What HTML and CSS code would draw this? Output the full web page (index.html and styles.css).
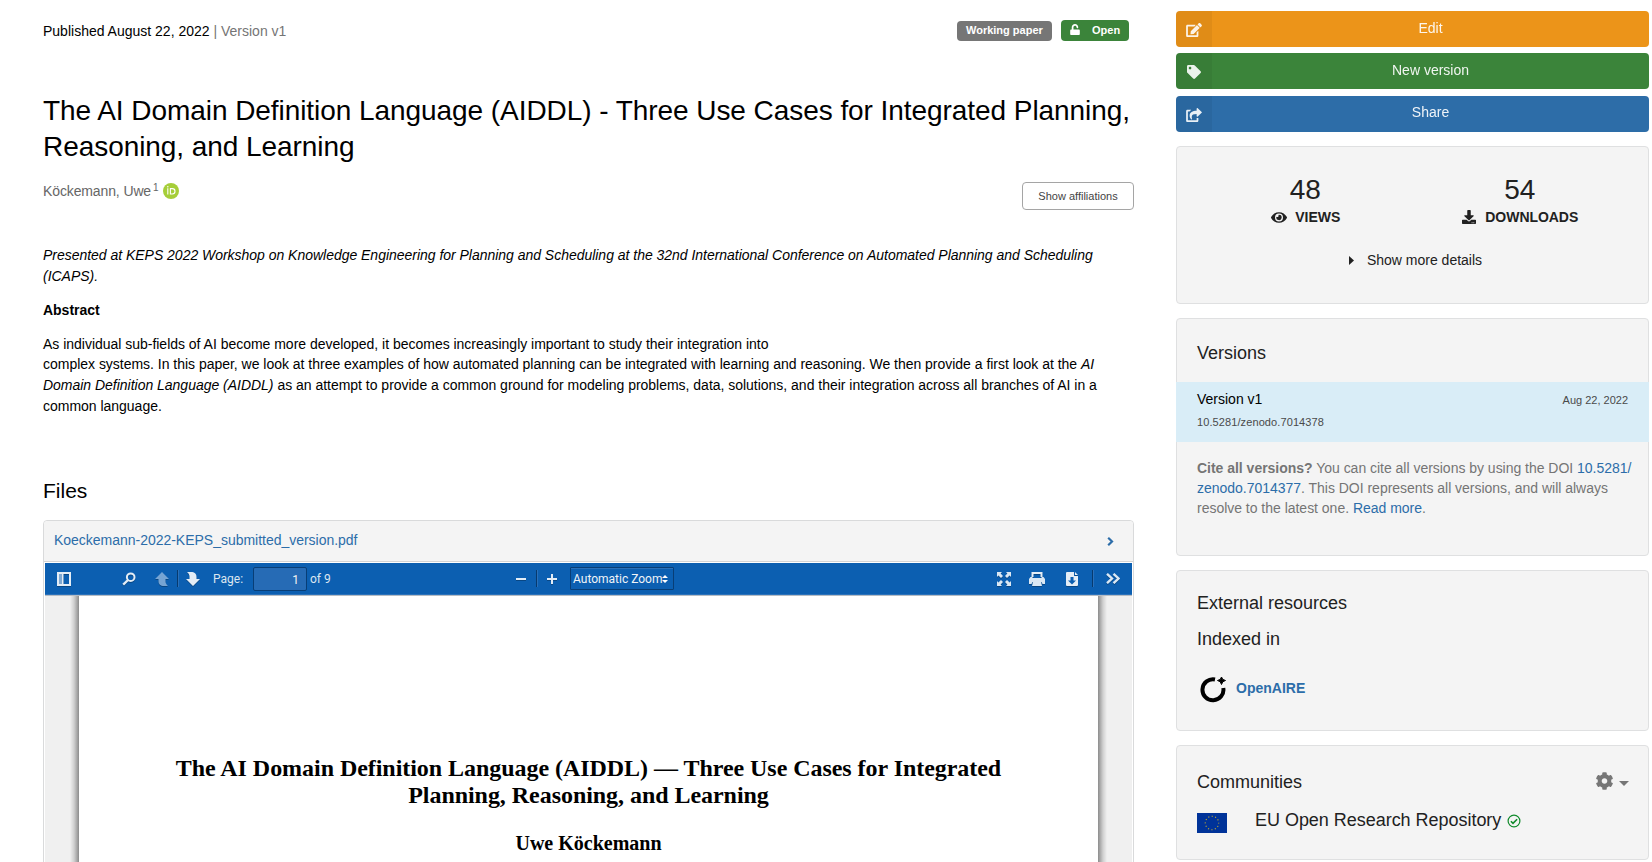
FILE: index.html
```html
<!DOCTYPE html>
<html lang="en">
<head>
<meta charset="utf-8">
<title>The AI Domain Definition Language (AIDDL)</title>
<link rel="stylesheet" href="styles.css">
</head>
<body>
<div class="page">
<main class="record">
  <div class="meta">
    <p class="meta-text">Published August 22, 2022 <span class="muted">| Version v1</span></p>
    <div class="labels">
      <span class="label label-type">Working paper</span>
      <span class="label label-open"><svg class="lock" viewBox="0 0 448 512"><path d="M400 256H152V152.900c0-39.600 31.700-72.500 71.300-72.900 40-.4 72.700 32.100 72.700 72v16c0 13.300 10.700 24 24 24h32c13.300 0 24-10.700 24-24v-16C376 68 307.500-.3 223.500 0 139.500.3 72 69.500 72 153.500V256H48c-26.500 0-48 21.500-48 48v160c0 26.500 21.500 48 48 48h352c26.500 0 48-21.500 48-48V304c0-26.500-21.500-48-48-48z"/></svg>Open</span>
    </div>
  </div>
  <h1 class="title">The AI Domain Definition Language (AIDDL) - Three Use Cases for Integrated Planning,<br>Reasoning, and Learning</h1>
  <div class="creators">
    <p class="creator"><span class="creator-name">Köckemann, Uwe</span><sup class="aff">1</sup><svg class="orcid" viewBox="0 0 16 16"><circle cx="8" cy="8" r="8" fill="#a6ce39"/><g fill="none" stroke="#fff"><path d="M4.800 5.200v6.300M7.400 5.600h1.900a2.700 2.700 0 0 1 0 5.400H7.400z" stroke-width="1.100"/></g><circle cx="4.800" cy="3.800" r=".75" fill="#fff"/></svg></p>
    <button class="aff-button">Show affiliations</button>
  </div>
  <section class="description">
    <p class="venue"><em>Presented at KEPS 2022 Workshop on Knowledge Engineering for Planning and Scheduling at the 32nd International Conference on Automated Planning and Scheduling<br>(ICAPS).</em></p>
    <p><b>Abstract</b></p>
    <p class="abstract">As individual sub-fields of AI become more developed, it becomes increasingly important to study their integration into<br>complex systems. In this paper, we look at three examples of how automated planning can be integrated with learning and reasoning. We then provide a first look at the <em>AI<br>Domain Definition Language (AIDDL)</em> as an attempt to provide a common ground for modeling problems, data, solutions, and their integration across all branches of AI in a<br>common language.</p>
  </section>
  <h2 class="files-title">Files</h2>
  <section class="preview">
    <div class="preview-head"><a>Koeckemann-2022-KEPS_submitted_version.pdf</a><svg class="chevron" viewBox="0 0 7 9"><path d="M1.200.8L5 4.500 1.200 8.200" fill="none" stroke="#2c6da9" stroke-width="2.200"/></svg></div>
    <div class="viewer">
      <div class="toolbar">
        <div class="tools-left">
          <svg class="ic ic-side" viewBox="0 0 14 14"><path d="M1 1h12v12H1zM5.500 1v12" fill="none" stroke="#e4edf6" stroke-width="2"/><path d="M2 2h3v10H2z" fill="#7fa9d3"/></svg>
          <svg class="ic ic-search" viewBox="0 0 14 14"><circle cx="8.700" cy="5.200" r="3.800" fill="none" stroke="#e4edf6" stroke-width="2"/><path d="M6 8L1.200 12.600" stroke="#e4edf6" stroke-width="2.400"/></svg>
          <svg class="ic ic-up" viewBox="0 0 14 14"><path d="M7 0l7 7h-3.500v2.500c0 1.800 1 3 2.500 4.500H9c-3.500 0-5.500-1.500-5.500-5V7H0z" fill="#76a4d3"/></svg>
          <i class="sep"></i>
          <svg class="ic ic-down" viewBox="0 0 14 14"><path d="M7 14l7-7h-3.500V5c0-3.500-2-5-5.500-5H1c1.500 1.500 2.500 2.500 2.500 4.500V7H0z" fill="#e4edf6"/></svg>
          <span class="page-label">Page:</span>
          <span class="page-input">1</span>
          <span class="page-count">of 9</span>
        </div>
        <div class="tools-mid">
          <svg class="ic ic-minus" viewBox="0 0 10 10"><path d="M0 5h10" stroke="#e4edf6" stroke-width="2"/></svg>
          <i class="sep"></i>
          <svg class="ic ic-plus" viewBox="0 0 10 10"><path d="M0 5h10M5 0v10" stroke="#e4edf6" stroke-width="2"/></svg>
          <span class="zoom">Automatic Zoom<svg class="updown" viewBox="0 0 6 8"><path d="M3 0l3 3H0zM3 8l3-3H0z" fill="#fff"/></svg></span>
        </div>
        <div class="tools-right">
          <svg class="ic ic-full" viewBox="0 0 14 14"><path d="M0 0h5L3.600 1.400 6 4 4 6 1.400 3.600 0 5zM14 0v5l-1.400-1.400L10 6 8 4l2.400-2.600L9 0zM0 14V9l1.400 1.400L4 8l2 2-2.400 2.600L5 14zM14 14H9l1.400-1.400L8 10l2-2 2.600 2.400L14 9z" fill="#dbe8f4"/></svg>
          <svg class="ic ic-print" viewBox="0 0 16 14"><path d="M3.500 5V1h9v4" fill="none" stroke="#e4edf6" stroke-width="2"/><path d="M1.500 5h2v1h9V5h2L16 7v5h-2.500l-1-2h-9l-1 2H0V7zM4 10h8l1 4H3z" fill="#dbe8f4"/></svg>
          <svg class="ic ic-save" viewBox="0 0 12 14"><path d="M0 1q0-1 1-1h7v4h4v9q0 1-1 1H1q-1 0-1-1zM9 0l3 3H9z" fill="#e4edf6"/><path d="M4.500 5h3v3.500H10L6 12.500 2 8.500h2.500z" fill="#0c5fb1"/></svg>
          <i class="sep"></i>
          <svg class="ic ic-more" viewBox="0 0 14 11"><path d="M1 .8l5 4.700-5 4.700M7.500.8l5 4.700-5 4.700" fill="none" stroke="#dbe8f4" stroke-width="2.400"/></svg>
        </div>
      </div>
      <div class="canvas">
        <div class="sheet">
          <p class="paper-title">The AI Domain Definition Language (AIDDL) — Three Use Cases for Integrated<br>Planning, Reasoning, and Learning</p>
          <p class="paper-author">Uwe Köckemann</p>
        </div>
      </div>
    </div>
  </section>
</main>
<aside class="sidebar">
  <div class="actions">
    <button class="action edit"><span class="action-icon"><svg viewBox="0 0 576 512"><path d="M402.600 83.200l90.200 90.200c3.800 3.800 3.800 10 0 13.800L274.400 405.600l-92.800 10.300c-12.400 1.400-22.900-9.100-21.500-21.500l10.300-92.800L388.800 83.200c3.800-3.800 10-3.800 13.800 0zm162-22.900l-48.800-48.800c-15.200-15.200-39.900-15.200-55.200 0l-35.400 35.400c-3.800 3.800-3.800 10 0 13.800l90.200 90.200c3.800 3.800 10 3.800 13.800 0l35.400-35.400c15.200-15.300 15.200-40 0-55.200zM384 346.200V448H64V128h229.800c3.200 0 6.200-1.300 8.500-3.500l40-40c7.600-7.600 2.200-20.500-8.500-20.500H48C21.500 64 0 85.500 0 112v352c0 26.500 21.500 48 48 48h352c26.500 0 48-21.500 48-48V306.200c0-10.700-12.900-16-20.500-8.500l-40 40c-2.200 2.300-3.500 5.300-3.500 8.500z"/></svg></span><span class="action-text">Edit</span></button>
    <button class="action new"><span class="action-icon"><svg viewBox="0 0 512 512"><path d="M0 252.100V48C0 21.500 21.500 0 48 0h204.100a48 48 0 0 1 33.900 14.100l211.900 211.900c18.700 18.700 18.700 49.100 0 67.900L293.800 497.900c-18.700 18.700-49.100 18.700-67.900 0L14.100 286.100A48 48 0 0 1 0 252.100zM112 64c-26.500 0-48 21.500-48 48s21.500 48 48 48 48-21.500 48-48-21.500-48-48-48z"/></svg></span><span class="action-text">New version</span></button>
    <button class="action share"><span class="action-icon"><svg viewBox="0 0 576 512"><path d="M568.500 177.400L424.500 313.400C409.300 327.800 384 317.100 384 296v-72.100C239.600 226 174.600 259.600 218.500 400c4.400 13.900-12.400 24.700-24.200 16.100C156.600 388.700 128 336.200 128 283.300 128 149.700 237.100 97.300 384 96V24c0-21.200 25.300-31.800 40.500-17.400l144 136c10 9.500 10 25.400 0 34.800zM384 379.100V448H64V128h50.900a12 12 0 0 0 8.600-3.700c15-15.600 32.200-27.900 51-37.700C185.700 80.800 181.600 64 169 64H48C21.500 64 0 85.500 0 112v352c0 26.500 21.500 48 48 48h352c26.500 0 48-21.500 48-48v-88.800c0-8.200-8-14-15.700-11.300a96 96 0 0 1-34.200 5c-7.500-.3-14.100 2.800-14.100 10.200z"/></svg></span><span class="action-text">Share</span></button>
  </div>
  <section class="card stats">
    <div class="stat-row">
      <div class="stat"><div class="num">48</div><div class="stat-label"><svg class="eye" viewBox="0 64 576 384"><path d="M572.500 241.400C518.300 135.600 410.900 64 288 64S57.700 135.600 3.500 241.400a32.400 32.400 0 0 0 0 29.200C57.700 376.400 165.100 448 288 448s230.300-71.600 284.500-177.400a32.400 32.400 0 0 0 0-29.200zM288 400a144 144 0 1 1 144-144 143.900 143.900 0 0 1-144 144zm0-240a95.300 95.300 0 0 0-25.300 3.800 47.900 47.900 0 0 1-66.900 66.900A95.800 95.800 0 1 0 288 160z"/></svg>VIEWS</div></div>
      <div class="stat"><div class="num">54</div><div class="stat-label"><svg class="dl" viewBox="0 0 512 512"><path d="M216 0h80c13.300 0 24 10.700 24 24v168h87.700c17.800 0 26.700 21.500 14.100 34.100L269.700 378.300c-7.500 7.500-19.800 7.500-27.300 0L90.100 226.100c-12.600-12.600-3.700-34.100 14.100-34.100H192V24c0-13.300 10.700-24 24-24zm296 376v112c0 13.300-10.700 24-24 24H24c-13.300 0-24-10.700-24-24V376c0-13.300 10.700-24 24-24h146.700l49 49c20.100 20.100 52.500 20.100 72.600 0l49-49H488c13.300 0 24 10.700 24 24zm-124 88a20 20 0 1 0-40 0 20 20 0 0 0 40 0zm64 0a20 20 0 1 0-40 0 20 20 0 0 0 40 0z"/></svg>DOWNLOADS</div></div>
    </div>
    <div class="more"><svg class="tri" viewBox="0 0 5 9"><path d="M0 0l5 4.500L0 9z"/></svg>Show more details</div>
  </section>
  <section class="card versions">
    <h3>Versions</h3>
    <div class="version">
      <div class="version-top"><span class="v-name">Version v1</span><span class="v-date">Aug 22, 2022</span></div>
      <div class="v-doi">10.5281/zenodo.7014378</div>
    </div>
    <p class="cite"><b>Cite all versions?</b> You can cite all versions by using the DOI <a>10.5281/<br>zenodo.7014377</a>. This DOI represents all versions, and will always<br>resolve to the latest one. <a>Read more</a>.</p>
  </section>
  <section class="card external">
    <h3>External resources</h3>
    <h3>Indexed in</h3>
    <div class="indexed"><svg class="oa" viewBox="0 0 26 26"><path d="M15 2.500A10.500 10.500 0 1 0 23.300 11" fill="none" stroke="#000" stroke-width="4"/><path d="M21.500 0q.6 3 4 3.500-3.400.6-4 4-.6-3.400-4-4Q20.900 3 21.500 0z" stroke="#000" stroke-width="1"/></svg><a>OpenAIRE</a></div>
  </section>
  <section class="card communities">
    <div class="comm-head"><h3>Communities</h3><div class="comm-menu"><svg class="gear" viewBox="15 8 482 496"><path d="M487.400 315.700l-42.600-24.600c4.300-23.200 4.300-47 0-70.200l42.600-24.600c4.900-2.800 7.100-8.600 5.500-14-11.100-35.600-30-67.800-54.700-94.600-3.800-4.100-10-5.100-14.800-2.300L380.800 110c-17.900-15.400-38.500-27.300-60.800-35.100V25.800c0-5.600-3.900-10.500-9.400-11.700-36.700-8.200-74.300-7.800-109.200 0-5.500 1.200-9.400 6.100-9.400 11.700V75c-22.200 7.900-42.800 19.800-60.800 35.100L88.700 85.500c-4.900-2.800-11-1.900-14.800 2.300-24.700 26.700-43.600 58.900-54.700 94.600-1.700 5.400.6 11.200 5.500 14L67.300 221c-4.300 23.200-4.300 47 0 70.200l-42.600 24.600c-4.900 2.800-7.100 8.600-5.500 14 11.100 35.600 30 67.800 54.700 94.600 3.800 4.100 10 5.100 14.800 2.300l42.600-24.600c17.900 15.400 38.500 27.300 60.800 35.100v49.200c0 5.600 3.900 10.500 9.400 11.700 36.700 8.200 74.300 7.800 109.200 0 5.500-1.200 9.400-6.100 9.400-11.700v-49.200c22.200-7.900 42.800-19.800 60.800-35.100l42.600 24.600c4.900 2.800 11 1.900 14.800-2.300 24.700-26.700 43.600-58.900 54.700-94.600 1.500-5.500-.7-11.300-5.600-14.100zM256 336c-44.100 0-80-35.900-80-80s35.900-80 80-80 80 35.900 80 80-35.900 80-80 80z"/></svg><svg class="caret" viewBox="0 0 10 5"><path d="M0 0h10L5 5z"/></svg></div></div>
    <div class="comm"><svg class="flag" viewBox="0 0 30 20"><path fill="#039" d="M0 0h30v20H0z"/><circle cx="15" cy="10" r="6.700" fill="none" stroke="#c9b02c" stroke-width="1.100" stroke-dasharray="1.100 2.408" stroke-dashoffset=".55"/></svg><span class="comm-name">EU Open Research Repository</span><svg class="check" viewBox="0 0 14 14"><circle cx="7" cy="7" r="5.900" fill="none" stroke="#108a2b" stroke-width="1.200"/><path d="M3.900 7.200l2.100 2.100 4.100-4.100" fill="none" stroke="#108a2b" stroke-width="1.600"/></svg></div>
  </section>
</aside>
</div>
</body>
</html>
```
FILE: styles.css
```css
* { box-sizing: border-box; }
body { margin: 0; background: #fff; color: #000; font: 14px/20px "Liberation Sans", Arial, sans-serif; }
p, h1, h2, h3 { margin: 0; font-weight: 400; }
svg { display: block; flex: none; }
a { color: #2c6da9; }
button { border: 0; font-family: inherit; margin: 0; }
.page { display: flex; width: 1652px; height: 862px; overflow: hidden; padding-left: 43px; gap: 42px; }
.record { width: 1091px; flex: none; display: flex; flex-direction: column; }
.record > * { flex: none; }
.meta { display: flex; justify-content: space-between; height: 86px; padding: 20px 5px 0 0; }
.meta-text { padding-top: 1px; }
.muted { color: #757575; }
.labels { display: flex; align-items: flex-start; gap: 9px; }
.label { height: 20px; margin-top: 1px; border-radius: 4px; color: #fff; font-size: 11px; font-weight: 700; line-height: 19px; padding: 0 9px; display: flex; white-space: nowrap; }
.label-type { background: #767676; width: 95px; }
.label-open { background: #3b843a; width: 68px; height: 21px; margin-top: 0; line-height: 21px; }
.lock { width: 10px; height: 11px; margin: 4px 12px 0 0; fill: #fff; }
.title { font-size: 28px; line-height: 36px; height: 90px; padding-top: 7px; white-space: nowrap; letter-spacing: -.06px; }
.creators { display: flex; justify-content: space-between; height: 70px; padding-top: 4px; }
.creator { display: flex; color: #666; padding-top: 1px; height: 20px; }
.creator-name { letter-spacing: -.12px; }
.aff { font-size: 10px; line-height: 14px; margin-left: 2px; }
.orcid { width: 16px; height: 16px; margin: 2px 0 0 4px; }
.aff-button { width: 112px; height: 28px; margin-top: 2px; background: #fff; border: 1px solid #a5a5a5; border-radius: 4px; font-size: 11px; color: #444; padding: 0; line-height: 26px; }
.description { display: flex; flex-direction: column; gap: 13.300px; line-height: 20.700px; white-space: nowrap; height: 231px; margin-top: -1px; letter-spacing: -.023px; }
.abstract { letter-spacing: -.018px; }
.files-title { font-size: 21px; line-height: 30px; height: 44px; }
.preview { border: 1px solid #d9dadb; border-radius: 4px 4px 0 0; height: 360px; }
.preview-head { height: 41px; background: #f4f4f4; border-bottom: 1px solid #d4d4d5; display: flex; justify-content: space-between; padding: 9px 19px 0 10px; border-radius: 4px 4px 0 0; letter-spacing: -.02px; }
.chevron { width: 7px; height: 9px; margin-top: 7px; }
.viewer { padding: 1px 1px 0; }
.toolbar { height: 32px; background: #0c5fb1; border-bottom: 1px solid #2b72bb; display: flex; align-items: center; color: #dce6f0; font: 12px/16px Roboto, sans-serif; position: relative; z-index: 1; box-shadow: 0 1px 0 #b5bcc4; }
.tools-left, .tools-mid, .tools-right { display: flex; align-items: center; }
.tools-left { width: 471px; padding-left: 12px; }
.tools-mid { width: 481px; }
.tools-right { flex: 1; }
.ic { width: 14px; height: 14px; filter: drop-shadow(0 1px 0 rgba(0,0,0,.25)); }
.ic-search { margin-left: 51px; }
.ic-up { margin-left: 19px; }
.sep { width: 1px; height: 17px; background: #073a6e; box-shadow: 1px 0 0 #2a70ba; }
.ic-up + .sep { margin: 0 8px; }
.page-label { margin-left: 13px; width: 40px; }
.page-input { width: 54px; height: 24px; border: 1px solid #083e76; border-radius: 2px; background: #266bb5; text-align: right; padding: 4px 7px 0 0; color: #f2f2f2; font-size: 12px; }
.page-count { margin-left: 3px; }
.ic-minus, .ic-plus { width: 10px; height: 10px; }
.ic-minus + .sep { margin: 0 10px; }
.zoom { margin-left: 13px; width: 104px; height: 23px; border: 1px solid #083e76; border-radius: 1px; box-shadow: inset 0 1px 0 #2a70ba; padding: 3px 0 0 2px; display: flex; color: #f0f4f8; white-space: nowrap; }
.updown { width: 6px; height: 8px; margin-top: 4px; }
.ic-print { width: 16px; margin: 0 21px 0 18px; }
.ic-save { width: 12px; margin-right: 14px; }
.ic-more { height: 11px; margin-left: 13px; }
.canvas { height: 284px; padding: 0 34px; background: linear-gradient(90deg, #f0f0f0 25px, #d0d0d0 29px, #8c8c8c 34px, #fff 34px, #fff calc(100% - 34px), #8c8c8c calc(100% - 34px), #d0d0d0 calc(100% - 29px), #f0f0f0 calc(100% - 25px)); }
.sheet { font-family: "Liberation Serif", "Times New Roman", serif; text-align: center; padding-top: 160px; }
.sheet p { font-weight: 700; }
.paper-title { font-size: 24px; line-height: 27px; white-space: nowrap; letter-spacing: -.045px; }
.paper-author { font-size: 20px; line-height: 24px; margin-top: 22px; }
.sidebar { width: 473px; flex: none; padding-top: 11px; display: flex; flex-direction: column; gap: 14px; color: #212121; }
.actions { display: flex; flex-direction: column; gap: 6px; }
.action { display: flex; width: 473px; height: 36px; padding: 0; border-radius: 4px; color: #fff; font-size: 14px; overflow: hidden; }
.action-icon { width: 36px; height: 36px; background: rgba(0,0,0,.05); padding: 12px 0 0 10px; }
.action-icon svg { width: 16px; height: 14px; fill: #fff; opacity: .9; }
.new .action-icon svg { width: 14px; margin-left: 1px; }
.action-text { flex: 1; text-align: center; line-height: 34px; opacity: .92; }
.edit { background: #ec9419; }
.new { background: #3b843a; }
.share { background: #2d6da8; margin-top: 1px; }
.share .action-text { line-height: 32px; }
.card { background: #f4f4f4; border: 1px solid #dfe0e1; border-radius: 4px; }
.card h3 { font-size: 18px; line-height: 24px; }
.stats { height: 158px; padding-top: 27px; }
.stat-row { display: flex; padding: 0 21px; }
.stat { flex: 1; text-align: center; }
.num { font-size: 28px; line-height: 32px; }
.stat-label { display: flex; justify-content: center; font-weight: 700; line-height: 20px; margin-top: 1px; padding-left: 1px; letter-spacing: -.05px; }
.eye { width: 16px; height: 11px; margin: 5px 8px 0 0; }
.dl { width: 14px; height: 14px; margin: 3px 9px 0 0; }
.stats svg { fill: #212121; }
.more { display: flex; justify-content: center; margin-top: 23px; padding-left: 6px; }
.tri { width: 5px; height: 9px; margin: 6px 13px 0 0; }
.versions { height: 238px; }
.versions h3 { height: 63px; padding: 22px 20px 0; }
.version { margin: 0 -1px; height: 60px; background: #d9edf7; padding: 7px 21px 0; }
.version-top { display: flex; justify-content: space-between; color: #000; }
.v-date, .v-doi { font-size: 11px; color: #4a4a4a; }
.v-date { padding-top: 1px; }
.v-doi { margin-top: 2px; letter-spacing: .1px; }
.cite { padding: 16px 0 0 20px; color: #757575; white-space: nowrap; letter-spacing: -.02px; }
.external { height: 161px; padding: 20px; }
.external h3 { margin-bottom: 12px; }
.indexed { display: flex; font-weight: 700; margin-top: 2px; }
.oa { width: 26px; height: 26px; margin: 14px 0 0 3px; }
.indexed a { margin: 15px 0 0 10px; }
.communities { height: 115px; padding: 24px 20px 0; }
.comm-head { display: flex; justify-content: space-between; }
.comm-menu { display: flex; fill: #767676; }
.gear { width: 17px; height: 18px; margin-top: 2px; }
.caret { width: 10px; height: 5px; margin: 11px -1px 0 6px; }
.comm { display: flex; margin-top: 14px; font-size: 18px; line-height: 24px; }
.flag { width: 30px; height: 20px; margin-top: 5px; }
.comm-name { margin-left: 28px; letter-spacing: -.03px; }
.check { width: 14px; height: 14px; margin: 6px 0 0 6px; }
```
